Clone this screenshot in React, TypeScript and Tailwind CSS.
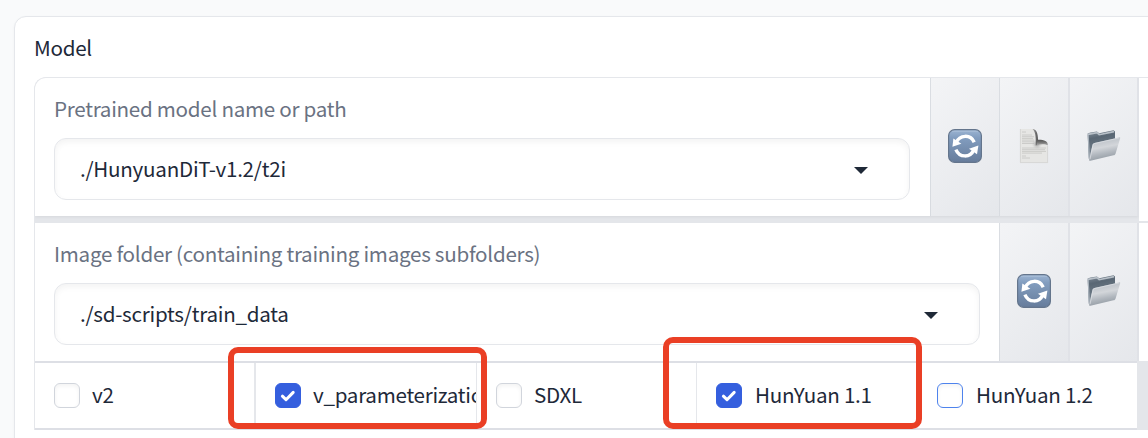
import React from "react";

function RefreshIcon() {
  return (
    <svg width="36" height="36" viewBox="0 0 36 36" className="block">
      <defs>
        <linearGradient id="refreshFill" x1="0" y1="0" x2="0" y2="1">
          <stop offset="0" stopColor="#9db5d3" />
          <stop offset="0.25" stopColor="#829dbf" />
          <stop offset="1" stopColor="#667c9b" />
        </linearGradient>
      </defs>
      <rect x="1.6" y="1.6" width="32.8" height="32.8" rx="6.2" fill="url(#refreshFill)" stroke="#64758c" strokeWidth="1.2" />
      <path d="M5 3.2H31" stroke="#c2d2e6" strokeWidth="0.8" opacity="0.6" />
      <path d="M9.2 14.6C12.6 6.6 23.6 6 27.2 14.2" fill="none" stroke="#fff" strokeWidth="3.4" />
      <path d="M5.4 18.8L6.4 10.4L14.4 15.8Z" fill="#fff" />
      <path d="M26.8 21.8C23.4 30 12.4 30 8.9 21.6" fill="none" stroke="#fff" strokeWidth="3.4" />
      <path d="M31.4 17.4L30 26.2L22 20.8Z" fill="#fff" />
    </svg>
  );
}

function DocumentIcon() {
  return (
    <svg width="36" height="36" viewBox="0 0 36 36" className="block">
      <defs>
        <linearGradient id="curlDown" x1="0" y1="0" x2="1" y2="0">
          <stop offset="0" stopColor="#a2a2a2" />
          <stop offset="1" stopColor="#505050" />
        </linearGradient>
        <linearGradient id="curlAcross" x1="0" y1="0" x2="0" y2="1">
          <stop offset="0" stopColor="#555" />
          <stop offset="0.4" stopColor="#6d6d6d" />
          <stop offset="1" stopColor="#b5b5b5" />
        </linearGradient>
        <radialGradient id="curlShade">
          <stop offset="0" stopColor="#777" stopOpacity="0.75" />
          <stop offset="1" stopColor="#ccc" stopOpacity="0" />
        </radialGradient>
      </defs>
      <path d="M4 1H17.5L22 12L32 18V35H4Z" fill="#e6e6e4" />
      <path d="M4.4 1V34.6H31.6V18" fill="none" stroke="#d2d2d0" strokeWidth="0.8" />
      <path d="M6 4H10M6 7H16M6 8.7H18M6 10.4H17M6 12.1H18M6 13.8H18M6 15.5H18M6 20H30M6 21.7H29M6 23.4H30M6 25.1H26M6 28H10M6 30H14" stroke="#c4c4c2" strokeWidth="0.8" />
      <circle cx="21" cy="16" r="5.5" fill="url(#curlShade)" />
      <path d="M16.5 1C20 1.2 22 4.5 22 12V16.5L19.8 17.5C19.8 11 20 4 16.5 1Z" fill="url(#curlDown)" />
      <path d="M21 11.7C27.5 11.4 32 12.6 32 17.6C29 15.9 25 15.8 20.6 17.6Z" fill="url(#curlAcross)" />
    </svg>
  );
}

function FolderIcon() {
  return (
    <svg width="36" height="36" viewBox="0 0 36 36" className="ml-px block">
      <defs>
        <linearGradient id="folderBack" x1="0" y1="0" x2="0.2" y2="1">
          <stop offset="0" stopColor="#87929e" />
          <stop offset="0.3" stopColor="#596774" />
          <stop offset="1" stopColor="#7c8893" />
        </linearGradient>
        <linearGradient id="folderFront" x1="0" y1="0" x2="0.25" y2="1">
          <stop offset="0" stopColor="#aeb5bd" />
          <stop offset="0.5" stopColor="#d3d6da" />
          <stop offset="0.75" stopColor="#b1b7be" />
          <stop offset="1" stopColor="#959da5" />
        </linearGradient>
      </defs>
      <path d="M1.6 5.6L4.4 4.6L10.8 3.4L13.2 5.3L27.6 2.2L29 3.6V13L5 32L2.8 30.6Z" fill="url(#folderBack)" />
      <path d="M2 6.4L11 4.6L13.2 6.7L28 3.6" fill="none" stroke="#b8c0c8" strokeWidth="1.6" />
      <path d="M2.2 7L3.4 31" stroke="#a9b2bb" strokeWidth="1.2" />
      <path d="M6.4 17.2C6.6 16 7.2 15.3 8.4 15.1L33 9.4C34 9.2 34.4 9.7 34.1 10.6L29.6 25.4C29.2 26.5 28.6 27 27.5 27.3L4.5 32.8C3.2 33 3 32.5 3.1 31.5Z" fill="url(#folderFront)" />
      <path d="M4 31.2L7 17C7.2 16.2 7.7 15.7 8.5 15.5L33.4 9.9" fill="none" stroke="#e0e3e7" strokeWidth="0.7" />
    </svg>
  );
}

function IconButton({ children, className }: { children: React.ReactNode; className: string }) {
  return (
    <button
      className={`flex h-full shrink-0 items-center justify-center bg-linear-135 from-[#f3f4f6] to-[#e5e7eb] pb-0.5 ${className}`}
    >
      {children}
    </button>
  );
}

function Dropdown({ label, value, className }: { label: string; value: string; className: string }) {
  return (
    <div className={`h-full min-w-0 flex-1 bg-white pt-3.5 pl-[19px] ${className}`}>
      <div className="h-[33px] text-[20.6px] leading-[33px] tracking-[-0.27px] whitespace-nowrap text-gray-500">{label}</div>
      <div className="mt-[13px] flex h-[62px] items-center justify-between rounded-xl border border-gray-200 bg-white pr-[41px] pl-[25px] shadow-[inset_0_3px_6px_rgba(0,0,0,0.05)]">
        <span className="pb-0.5 text-[20.6px] leading-[33px] tracking-[-0.25px] whitespace-nowrap">{value}</span>
        <svg width="14" height="7" viewBox="0 0 14 7" className="mt-[3px] block">
          <path d="M0 0H14L7 7Z" fill="#1f2937" />
        </svg>
      </div>
    </div>
  );
}

function Option({ label, checked, focused, className }: { label: string; checked?: boolean; focused?: boolean; className: string }) {
  const box = checked
    ? "border-[#355fde] bg-[#355fde]"
    : focused
      ? "border-[#4e83ed] bg-white shadow-[inset_0_2px_4px_rgba(0,0,0,0.05)]"
      : "border-gray-300 bg-white shadow-[inset_0_2px_4px_rgba(0,0,0,0.05)]";
  return (
    <label className={`flex h-full shrink-0 items-center overflow-hidden bg-white pl-[19px] ${className}`}>
      <span className={`flex h-[25px] w-[26px] shrink-0 items-center justify-center rounded-md border ${box}`}>
        {checked && (
          <svg width="26" height="25" viewBox="0 0 26 25" className="block shrink-0">
            <path d="M7.4 13.2L11 16.7L18.2 9.4" fill="none" stroke="#fff" strokeWidth="3" strokeLinecap="round" strokeLinejoin="round" />
          </svg>
        )}
      </span>
      <span className="pb-0.5 text-[20.6px] leading-[33px] tracking-[-0.27px] whitespace-nowrap">{label}</span>
    </label>
  );
}

export default function App() {
  return (
    <div className="relative h-[438px] w-[1148px] overflow-hidden bg-[#f9fafb] pt-4 pl-3.5 font-['Source_Sans_Pro','Noto_Sans_CJK_SC',sans-serif] text-gray-800">
      <section className="h-[460px] w-[1180px] rounded-xl border border-gray-200 bg-white pt-3.5 pl-[19px] shadow-[0_1px_3px_rgba(0,0,0,0.04)]">
        <h2 className="h-[33px] text-[20.6px] leading-[33px] font-normal tracking-[-0.27px]">Model</h2>
        <div className="mt-[13px] h-[353px] w-[1150px] overflow-hidden rounded-tl-xl border-t border-l border-gray-200 bg-[#dfe1e6]">
          <div className="flex h-[145px] bg-[#e4e6ea]">
            <div className="flex h-[138px] w-[1104px] bg-[#e0e2e7] pr-0.5 shadow-[0_1px_3px_rgba(0,0,0,0.06)]">
              <Dropdown className="pr-5" label="Pretrained model name or path" value="./HunyuanDiT-v1.2/t2i" />
              <IconButton className="w-[69px] border-l border-gray-300/70"><RefreshIcon /></IconButton>
              <IconButton className="w-[69px] border-l border-gray-300/70"><DocumentIcon /></IconButton>
              <IconButton className="w-[69px] border-l-2 border-[#e0e2e7]"><FolderIcon /></IconButton>
            </div>
            <div className="h-[143px] flex-1 bg-white" />
          </div>
          <div className="flex h-[138px]">
            <div className="flex w-[1104px] bg-[#e0e2e7] pr-0.5">
              <Dropdown className="pr-[19px]" label="Image folder (containing training images subfolders)" value="./sd-scripts/train_data" />
              <IconButton className="w-[69px] border-l border-gray-300/70"><RefreshIcon /></IconButton>
              <IconButton className="w-[69px] border-l-2 border-[#e0e2e7]"><FolderIcon /></IconButton>
            </div>
            <div className="flex-1 bg-white" />
          </div>
          <div className="flex h-[69px] bg-[#e4e6ea]">
            <div className="flex h-full w-[1102px] border-y-2 border-[#dddfe5]">
              <Option className="w-[219px] gap-3" label="v2" />
              <Option className="w-[222px] gap-3 border-l-2 border-gray-200" label="v_parameterization" checked />
              <Option className="w-[220px] gap-3 border-l border-gray-200" label="SDXL" />
              <Option className="w-[221px] gap-[13px] border-l border-gray-200" label="HunYuan 1.1" checked />
              <Option className="w-[220px] gap-[13px] border-l border-gray-200" label="HunYuan 1.2" focused />
            </div>
          </div>
          <div className="h-4 bg-white" />
        </div>
      </section>
      <div className="pointer-events-none absolute top-[347px] left-[228px] h-[82px] w-[259px] rounded-[10px] border-[6px] border-[#ea3f25]" />
      <div className="pointer-events-none absolute top-[337px] left-[663px] h-[92px] w-[259px] rounded-[10px] border-[6px] border-[#ea3f25]" />
    </div>
  );
}
